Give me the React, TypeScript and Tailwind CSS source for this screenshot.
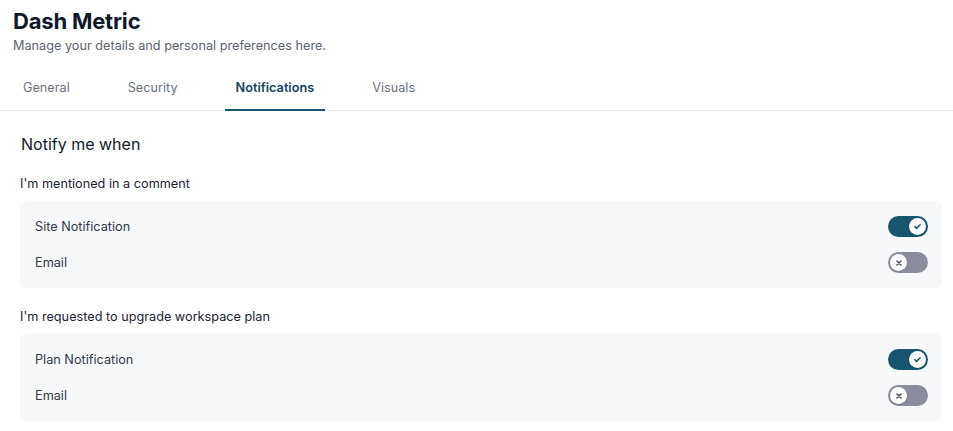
import { useState } from "react";

const tabs = ["General", "Security", "Notifications", "Visuals"];

function Toggle({ on, onChange }: { on: boolean; onChange: () => void }) {
  return (
    <button
      onClick={onChange}
      className={`relative flex h-[21px] w-[40px] items-center rounded-full px-[2px] ${
        on ? "justify-end bg-[#17566f]" : "justify-start bg-[#8a8e9c]"
      }`}
    >
      <span className="flex h-[17px] w-[17px] items-center justify-center rounded-full bg-white shadow-sm">
        {on ? (
          <svg width="9" height="9" viewBox="0 0 12 12" fill="none">
            <path d="M2.5 6.2l2.3 2.3 4.7-4.9" stroke="#17566f" strokeWidth="2" strokeLinecap="round" strokeLinejoin="round" />
          </svg>
        ) : (
          <svg width="8" height="8" viewBox="0 0 12 12" fill="none">
            <path d="M3 3l6 6M9 3l-6 6" stroke="#4b4f5c" strokeWidth="2.4" strokeLinecap="round" />
          </svg>
        )}
      </span>
    </button>
  );
}

function Section({ title, rows }: { title: string; rows: { label: string; initial: boolean }[] }) {
  const [state, setState] = useState(rows.map((r) => r.initial));
  return (
    <div>
      <p className="text-[12.7px] text-[#1c2330] leading-[18px]">{title}</p>
      <div className="mt-[8px] rounded-md bg-[#f7f8fa] pl-[15px] pr-[14px] py-[15px] flex flex-col gap-[15px]">
        {rows.map((r, i) => (
          <div key={i} className="flex items-center justify-between h-[21px]">
            <span className="text-[12.7px] text-[#333a48]">{r.label}</span>
            <Toggle on={state[i]} onChange={() => setState(state.map((s, j) => (j === i ? !s : s)))} />
          </div>
        ))}
      </div>
    </div>
  );
}

export default function App() {
  const [active, setActive] = useState("Notifications");
  return (
    <main className="min-h-screen bg-white font-['Inter',sans-serif]">
      <div className="px-[13px] pt-[7px]">
        <h1 className="text-[22px] font-bold text-[#111827] leading-[28px] tracking-[-0.2px]">Dash Metric</h1>
        <p className="mt-[2px] text-[12.7px] text-[#5b6371] leading-[18px]">
          Manage your details and personal preferences here.
        </p>
      </div>
      <div className="mt-[15px] flex gap-[36px] border-b border-[#e5e7eb] pl-[12px] pr-[13px]">
        {tabs.map((t) => (
          <button
            key={t}
            onClick={() => setActive(t)}
            className={`-mb-px border-b-2 px-[11px] pt-[9px] pb-[12px] text-[12.7px] leading-[18px] ${
              active === t
                ? "border-[#17566f] font-semibold text-[#17445a]"
                : "border-transparent text-[#6b7280]"
            }`}
          >
            {t}
          </button>
        ))}
      </div>
      <div className="px-[20px] pr-[11px] pt-[22px]">
        <h2 className="px-[1px] text-[16px] text-[#111827] leading-[22px]">Notify me when</h2>
        <div className="mt-[20px] flex flex-col gap-[20px]">
          <Section
            title="I'm mentioned in a comment"
            rows={[
              { label: "Site Notification", initial: true },
              { label: "Email", initial: false },
            ]}
          />
          <Section
            title="I'm requested to upgrade workspace plan"
            rows={[
              { label: "Plan Notification", initial: true },
              { label: "Email", initial: false },
            ]}
          />
        </div>
      </div>
    </main>
  );
}
